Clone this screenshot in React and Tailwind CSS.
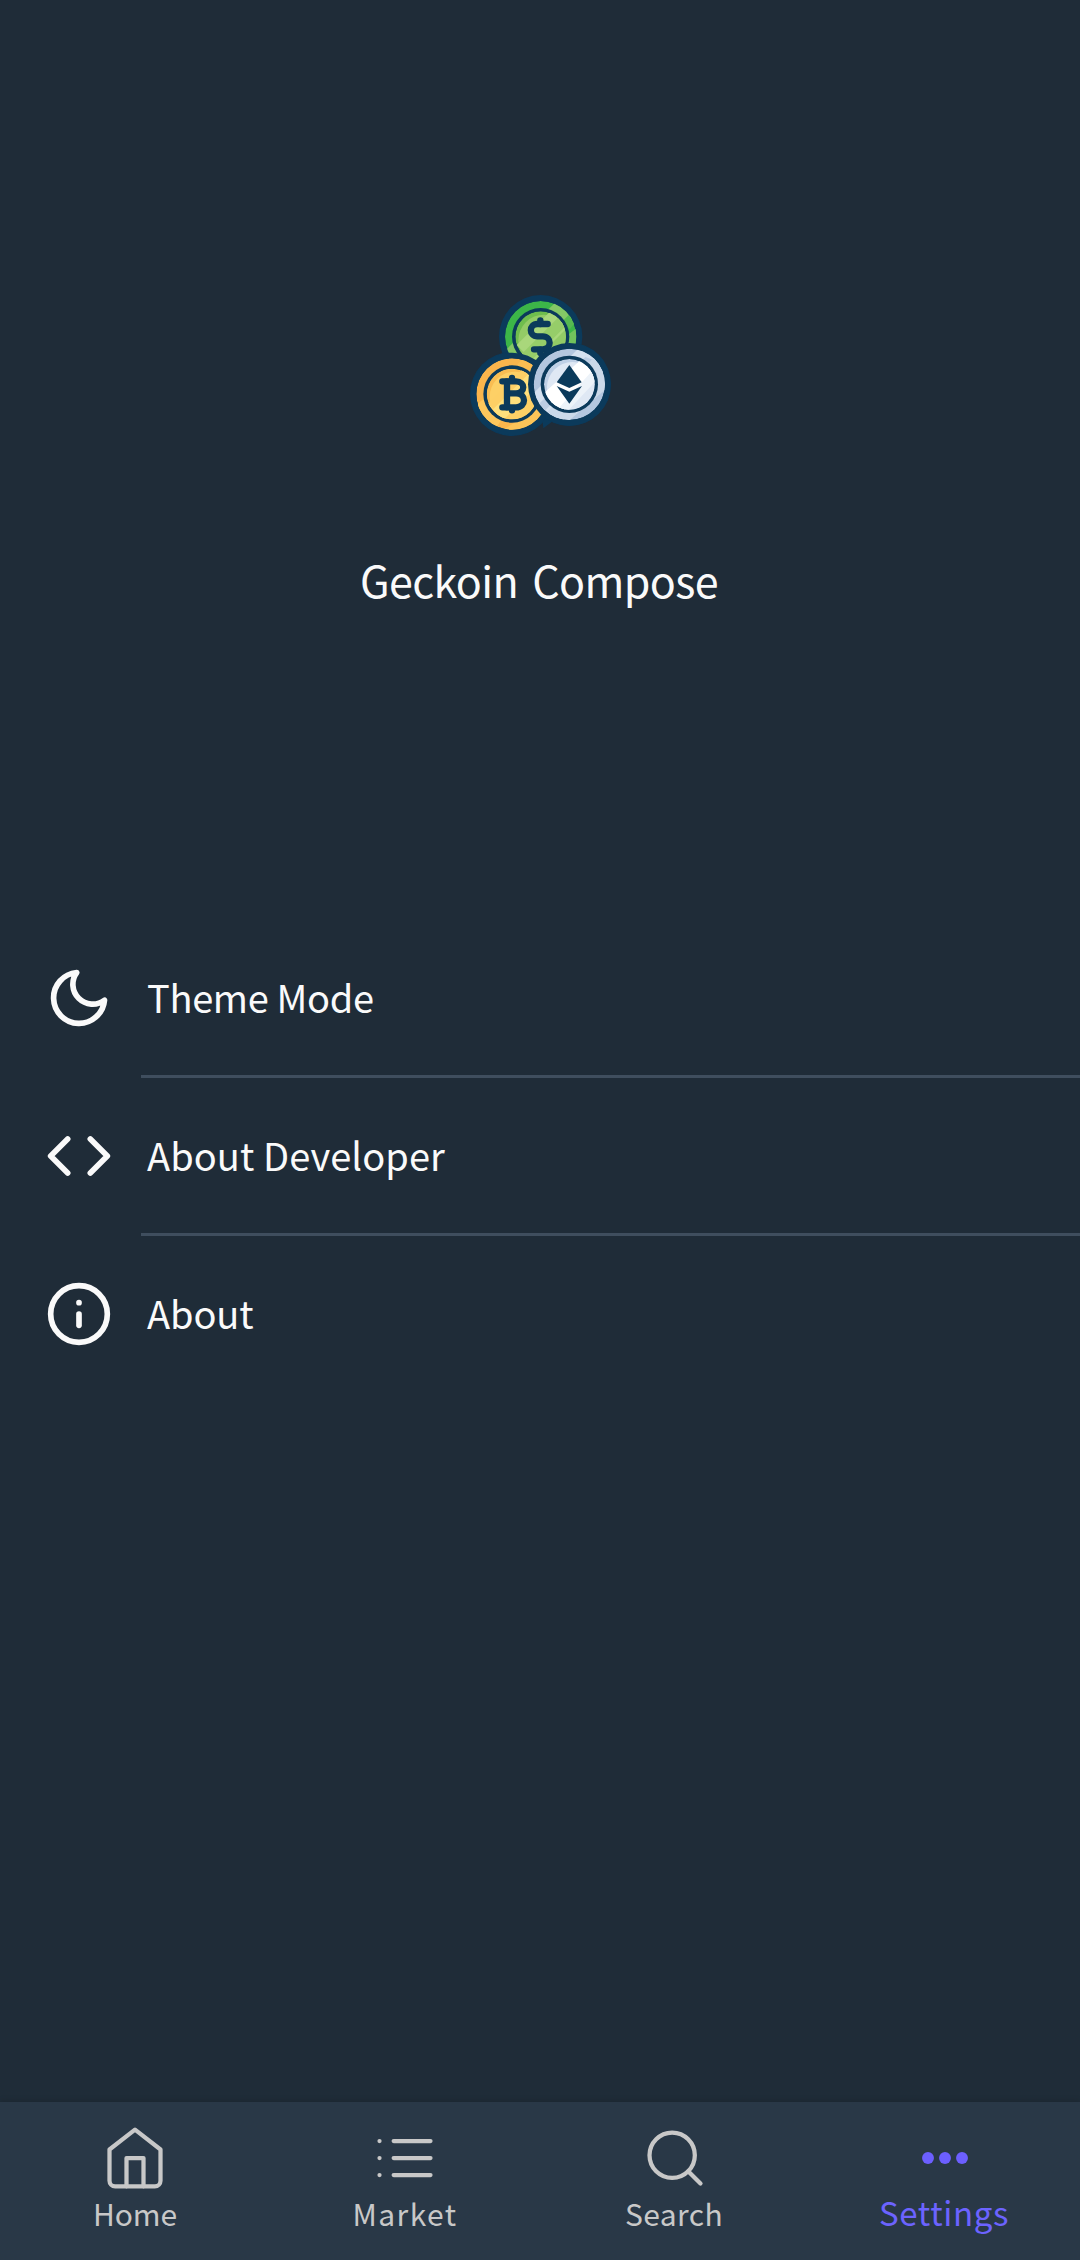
import { FiCode, FiHome, FiInfo, FiList, FiMoon, FiSearch } from "react-icons/fi";

const NAVY = "#0b3a5b";

function CoinsLogo() {
  return (
    <svg viewBox="0 0 480 480" className="size-40" role="img" aria-label="Coins">
      <defs>
        <clipPath id="greenRing"><circle cx="242" cy="155" r="107" /></clipPath>
        <clipPath id="greenFace"><circle cx="242" cy="155" r="76" /></clipPath>
        <clipPath id="goldRing"><circle cx="156" cy="327" r="107" /></clipPath>
        <clipPath id="goldFace"><circle cx="156" cy="327" r="76" /></clipPath>
        <clipPath id="silverRing"><circle cx="328" cy="298" r="107" /></clipPath>
        <clipPath id="silverFace"><circle cx="328" cy="298" r="76" /></clipPath>
      </defs>
      <g fill={NAVY}>
        <circle cx="242" cy="155" r="125" />
        <circle cx="156" cy="327" r="126" />
        <circle cx="328" cy="298" r="125" />
        <path d="M250 430L290 400L240 350z" />
      </g>

      {/* dollar */}
      <g clipPath="url(#greenRing)">
        <circle cx="242" cy="155" r="107" fill="#3cb648" />
        <path d="M310 30L360 80L150 290L90 240z" fill="#84c766" />
        <path d="M306 110L326 90L352 104L330 132z" fill="#56b951" />
        <path d="M350 130V250H130L150 204L270 190z" fill="#72c25c" />
      </g>
      <circle cx="242" cy="155" r="86" fill={NAVY} />
      <g clipPath="url(#greenFace)">
        <circle cx="242" cy="155" r="76" fill="#6fbd4d" />
        <circle cx="252" cy="166" r="77" fill="#93cb66" />
        <path d="M280 70L330 120L220 230L170 180z" fill="#a9d77b" />
        <path d="M300 92L324 116L200 240L176 216z" fill="#96cd69" />
      </g>
      <g fill="none" stroke={NAVY} strokeWidth="19" strokeLinecap="round" strokeLinejoin="round">
        <path d="M263 117H232C206 117 206 154 232 154H248C276 154 276 193 248 193H222" />
        <path d="M241 106V117M241 194V204" />
      </g>

      {/* bitcoin */}
      <circle cx="156" cy="327" r="124" fill={NAVY} />
      <g clipPath="url(#goldRing)">
        <circle cx="156" cy="327" r="107" fill="#f9b54c" />
        <path d="M205 205L260 250L90 425L40 370z" fill="#fbbd52" />
        <path d="M40 366L76 340L130 395L105 435z" fill="#fdc75c" />
        <path d="M250 360L120 440H280z" fill="#fbc458" />
      </g>
      <circle cx="156" cy="327" r="86" fill={NAVY} />
      <g clipPath="url(#goldFace)">
        <circle cx="156" cy="327" r="76" fill="#f9bd52" />
        <circle cx="165" cy="336" r="76" fill="#fdd066" />
        <path d="M205 240L250 285L130 405L85 360z" fill="#ffe07c" />
        <path d="M190 250L206 266L100 372L84 356z" fill="#fdcf65" />
      </g>
      <g fill="none" stroke={NAVY} strokeWidth="19" strokeLinecap="round" strokeLinejoin="round">
        <path d="M127 289H168C197 289 197 325 168 325H145M168 325C200 325 200 367 168 367H127" />
        <path d="M141 289V367M156 279V286M156 370V376" />
      </g>

      {/* ethereum */}
      <circle cx="328" cy="298" r="124" fill={NAVY} />
      <g clipPath="url(#silverRing)">
        <circle cx="328" cy="298" r="107" fill="#b4c7df" />
        <path d="M366 180L440 250L290 430L210 335z" fill="#d5e1ef" />
        <path d="M376 216L404 226L250 382L236 358z" fill="#bccde3" />
        <path d="M400 218L445 270L440 310L300 430L264 380z" fill="#cbd9e9" />
      </g>
      <circle cx="328" cy="298" r="86" fill={NAVY} />
      <g clipPath="url(#silverFace)">
        <circle cx="328" cy="298" r="76" fill="#bfd0e6" />
        <circle cx="337" cy="307" r="76" fill="#dfe8f4" />
        <path d="M373 215L415 265L300 390L245 330z" fill="#ffffff" />
        <path d="M396 258L410 285L325 376L296 370z" fill="#edf3f9" />
      </g>
      <path d="M328 240L365 292L328 309L290 292z" fill={NAVY} />
      <path d="M290 303L328 320L366 303L328 356z" fill={NAVY} />
    </svg>
  );
}

function DotsIcon({ className }) {
  return (
    <svg viewBox="0 0 24 24" className={className} fill="#6c5fff">
      <circle cx="6" cy="12" r="2.1" />
      <circle cx="12" cy="12" r="2.1" />
      <circle cx="18" cy="12" r="2.1" />
    </svg>
  );
}

const rows = [
  { label: "Theme Mode", Icon: FiMoon, text: "tracking-[-0.34px] -ml-px" },
  { label: "About Developer", Icon: FiCode, text: "tracking-[0.07px] -ml-px" },
  { label: "About", Icon: FiInfo, text: "tracking-[-0.1px] -ml-px" },
];

const tabs = [
  { label: "Home", Icon: FiHome, text: "tracking-[-0.1px]" },
  { label: "Market", Icon: FiList, text: "tracking-[1.4px]" },
  { label: "Search", Icon: FiSearch, text: "tracking-[0.4px] -ml-0.5" },
];

export default function App() {
  return (
    <div className="flex h-[2260px] w-[1080px] flex-col bg-[#1f2c38] font-['Noto_Sans_CJK_SC','Noto_Sans',sans-serif] text-[#fafafa]">
      <header className="flex h-[920px] flex-col items-center pt-[285px]">
        <CoinsLogo />
        <h1 className="mt-[102px] -ml-0.5 text-[43px] leading-[64px] tracking-[-0.6px] [word-spacing:5px]">Geckoin Compose</h1>
      </header>

      <main className="flex-1">
        {rows.map(({ label, Icon, text }, i) => (
          <div key={label} className="flex h-[158px]">
            <div className="flex h-[155px] w-[141px] items-center pl-[45px]">
              <Icon className="size-[68px]" />
            </div>
            <div className={i < 2 ? "flex flex-1 items-center border-b-3 border-[#3f4e5e] pb-0.5 pl-[7px]" : "flex flex-1 items-center border-b-3 border-transparent pb-0.5 pl-[7px]"}>
              <span className={`text-[38px] leading-[55px] ${text}`}>{label}</span>
            </div>
          </div>
        ))}
      </main>

      <nav className="grid h-[158px] grid-cols-4 bg-[#293847] text-[#c8c8c8] shadow-[0_-1px_6px_rgba(0,0,0,0.15)]">
        {tabs.map(({ label, Icon, text }) => (
          <div key={label} className="flex flex-col items-center pt-[22px]">
            <Icon className="size-[68px]" strokeWidth={1.5} />
            <span className={`-mt-px text-[30px] leading-[44px] ${text}`}>{label}</span>
          </div>
        ))}
        <div className="flex flex-col items-center pt-[22px]">
          <DotsIcon className="size-[68px]" />
          <span className="-mt-1 -ml-0.5 text-[33px] leading-[48px] tracking-[0.64px] text-[#6c63ff]">Settings</span>
        </div>
      </nav>
    </div>
  );
}
